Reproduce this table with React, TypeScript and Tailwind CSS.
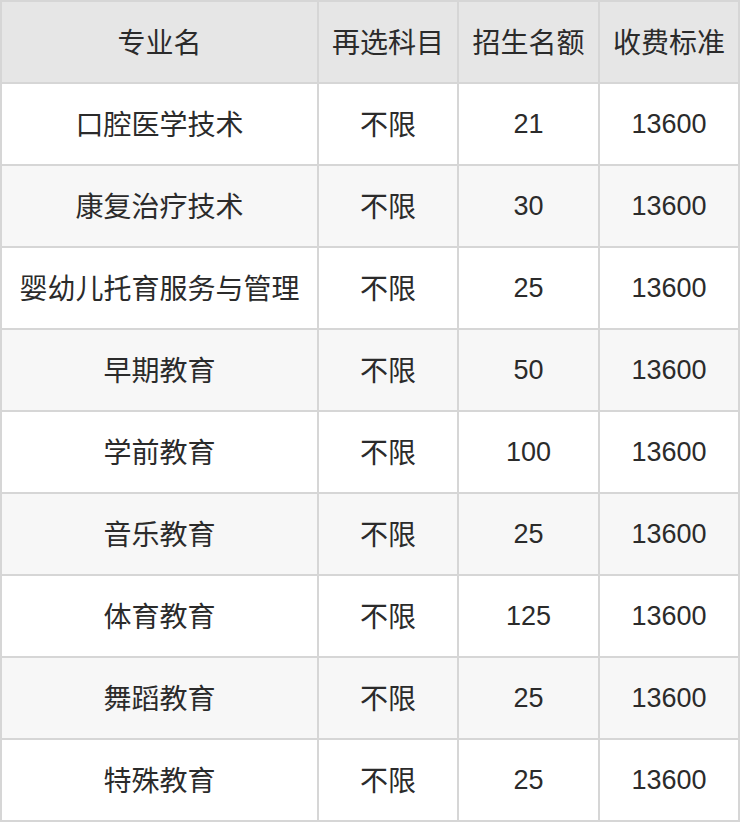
import React from "react";

const rows: [string, string, string, string][] = [
  ["口腔医学技术", "不限", "21", "13600"],
  ["康复治疗技术", "不限", "30", "13600"],
  ["婴幼儿托育服务与管理", "不限", "25", "13600"],
  ["早期教育", "不限", "50", "13600"],
  ["学前教育", "不限", "100", "13600"],
  ["音乐教育", "不限", "25", "13600"],
  ["体育教育", "不限", "125", "13600"],
  ["舞蹈教育", "不限", "25", "13600"],
  ["特殊教育", "不限", "25", "13600"],
];

const headers = ["专业名", "再选科目", "招生名额", "收费标准"];

export default function App() {
  return (
    <div
      className="w-[740px] h-[822px] bg-[#d6d6d6] p-[2px] grid grid-cols-[315px_138px_139px_138px] auto-rows-[80px] gap-[2px] text-[#2b2b2b] text-[28px]"
      style={{ fontFamily: '"Liberation Sans", "Noto Sans CJK SC", sans-serif' }}
    >
      {headers.map((h) => (
        <div key={h} className="bg-[#e6e6e6] flex items-center justify-center whitespace-nowrap pt-[4px]">
          {h}
        </div>
      ))}
      {rows.map((r, i) =>
        r.map((c, j) => (
          <div
            key={i + "-" + j}
            className={
              (i % 2 === 0 ? "bg-white" : "bg-[#f7f7f7]") +
              " flex items-center justify-center whitespace-nowrap" +
              (j >= 2 ? " text-[27px]" : " pt-[4px]")
            }
          >
            {c}
          </div>
        ))
      )}
    </div>
  );
}
